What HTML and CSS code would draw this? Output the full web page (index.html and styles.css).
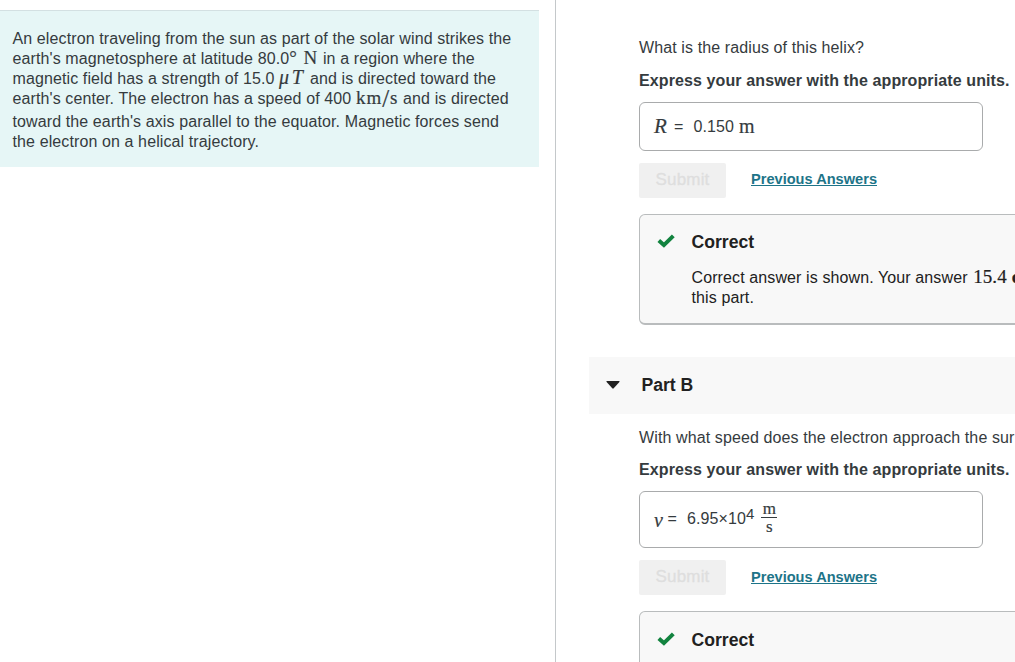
FILE: index.html
```html
<!DOCTYPE html>
<html lang="en">
<head>
  <meta charset="UTF-8">
  <meta name="viewport" content="width=device-width, initial-scale=1.0">
  <title>Part B</title>
  <link rel="stylesheet" href="styles.css">
</head>
<body>
  <div class="layout">
    <aside class="intro-pane">
      <div class="intro">
        <div>An electron traveling from the sun as part of the solar wind strikes the</div>
        <div>earth's magnetosphere at latitude 80.0<span class="math degree">°</span> <span class="math unit-n">N</span> in a region where the</div>
        <div>magnetic field has a strength of 15.0 <span class="math var mu-t">μT</span> and is directed toward the</div>
        <div class="tall">earth's center. The electron has a speed of 400 <span class="math kms">km<span class="slash">/</span>s</span> and is directed</div>
        <div>toward the earth's axis parallel to the equator. Magnetic forces send</div>
        <div>the electron on a helical trajectory.</div>
      </div>
    </aside>

    <main class="parts">
      <section class="part part-a">
        <p class="question">What is the radius of this helix?</p>
        <p class="instructions">Express your answer with the appropriate units.</p>
        <div class="answer">
          <span class="math var">R</span><span class="equals">=</span>
          <span class="value">0.150</span>
          <span class="math unit">m</span>
        </div>
        <div class="actions">
          <button class="submit" disabled>Submit</button>
          <a class="previous" href="#">Previous Answers</a>
        </div>
        <div class="feedback">
          <svg class="check" viewBox="0 0 18 14"><path d="M1.8 6.6 6.9 11.1 16.3 1.9" /></svg>
          <div class="feedback-body">
            <h3>Correct</h3>
            <div>Correct answer is shown. Your answer <span class="math result">15.4 <b>cm</b></span></div>
            <div>this part.</div>
          </div>
        </div>
      </section>

      <h2 class="part-header">
        <svg class="arrow" viewBox="0 0 14 8"><path d="M1 0h12q1 0 .4.9L7.7 7.3q-.7.7-1.4 0L.6.9Q0 0 1 0z" /></svg>
        Part B
      </h2>

      <section class="part part-b">
        <p class="question">With what speed does the electron approach the sur</p>
        <p class="instructions">Express your answer with the appropriate units.</p>
        <div class="answer">
          <span class="math var">v</span><span class="equals">=</span>
          <span class="value">6.95×10<sup>4</sup></span>
          <span class="math fraction"><span>m</span><span>s</span></span>
        </div>
        <div class="actions">
          <button class="submit" disabled>Submit</button>
          <a class="previous" href="#">Previous Answers</a>
        </div>
        <div class="feedback">
          <svg class="check" viewBox="0 0 18 14"><path d="M1.8 6.6 6.9 11.1 16.3 1.9" /></svg>
          <div class="feedback-body">
            <h3>Correct</h3>
          </div>
        </div>
      </section>
    </main>
  </div>
</body>
</html>
```

FILE: styles.css
```css
:root {
  --text-color: #353b3e;
  --dark-color: #212121;
  --link-color: #1d7488;
  --intro-bg: #e6f6f6;
  --panel-bg: #f8f8f8;
  --border-color: #b9bcbd;
}

* {
  margin: 0;
  padding: 0;
  box-sizing: border-box;
}

body {
  font-family: 'Liberation Sans', Arial, sans-serif;
  font-size: 16px;
  line-height: 20px;
  letter-spacing: 0.11px;
  color: var(--text-color);
  background-color: white;
  overflow: hidden;
}

.layout {
  display: flex;
  height: 662px;
}

.intro-pane {
  flex: 0 0 556px;
  padding: 10px 16px 0 0;
  border-right: 1px solid #c4c8ca;
}

.intro {
  height: 157px;
  padding: 18px 0 0 12.5px;
  background-color: var(--intro-bg);
  border-top: 1px solid #d3e0e2;
  white-space: nowrap;
}

.intro > div {
  height: 20px;
}

.intro > .tall {
  height: 23px;
}

.math {
  font-family: 'Liberation Serif', 'Times New Roman', serif;
  font-size: 19px;
  line-height: 1px;
  -webkit-text-stroke: 0.2px currentColor;
}

.var {
  font-style: italic;
}

.degree {
  margin-right: 2px;
}

.unit-n {
  margin-right: 1px;
}

.mu-t {
  font-size: 20px;
  letter-spacing: 2.6px;
}

.kms {
  letter-spacing: 1px;
}

.slash {
  font-size: 25px;
  vertical-align: -3px;
}

.parts {
  flex: 1;
  min-width: 0;
  padding-left: 33px;
  overflow: hidden;
  white-space: nowrap;
}

.part {
  width: 460px;
  padding-left: 50px;
}

.part-a {
  height: 357px;
  padding-top: 38px;
}

.part-b {
  padding-top: 14px;
}

.instructions {
  margin-top: 12px;
  font-weight: bold;
}

.part-a .instructions {
  margin-top: 13px;
}

.answer {
  display: flex;
  align-items: center;
  width: 344px;
  height: 49px;
  margin-top: 11px;
  padding-left: 14px;
  border: 1px solid #a9abac;
  border-radius: 6px;
}

.answer > .var {
  font-size: 21px;
}

.part-b .answer {
  height: 57px;
  padding-bottom: 2px;
}

.part-b .answer > .var {
  margin-top: 3px;
  font-size: 20px;
}

.equals {
  margin: 0 10px 0 7px;
}

.part-b .equals {
  margin-left: 4.5px;
}

.unit {
  margin-left: 5px;
  font-size: 20px;
}

sup {
  font-size: 15px;
  line-height: 1px;
  vertical-align: 5px;
}

.fraction {
  display: flex;
  flex-direction: column;
  align-items: center;
  width: 16px;
  margin: -2px 0 0 7px;
  font-size: 17px;
  line-height: 17px;
}

.fraction span:first-child {
  width: 16px;
  text-align: center;
  border-bottom: 1px solid var(--text-color);
}

.actions {
  display: flex;
  align-items: center;
  margin-top: 12px;
}

.submit {
  width: 87px;
  height: 35px;
  padding-bottom: 1px;
  font: 17px 'Liberation Sans', Arial, sans-serif;
  letter-spacing: 0.2px;
  color: #dedede;
  -webkit-text-stroke: 0.3px #dedede;
  background-color: #f0f0f0;
  border: none;
  border-radius: 2px;
}

.previous {
  margin: -3px 0 0 25px;
  font-size: 14.6px;
  font-weight: bold;
  letter-spacing: 0;
  color: var(--link-color);
}

.part-b .previous {
  margin-top: -2px;
}

.feedback {
  display: flex;
  height: 111px;
  margin-top: 16px;
  padding: 17px 0 0 17px;
  color: var(--dark-color);
  background-color: var(--panel-bg);
  border: 1px solid var(--border-color);
  border-bottom-width: 2px;
  border-radius: 6px;
}

.part-b .feedback {
  padding-top: 18px;
}

.check {
  flex: none;
  width: 18px;
  height: 14px;
  margin: 2px 16.5px 0 0;
  fill: none;
  stroke: #12833f;
  stroke-width: 4;
}

.result {
  margin-left: 1px;
}

h3 {
  margin-bottom: 16px;
  font-size: 17.6px;
  line-height: 20px;
  letter-spacing: 0;
}

.part-header {
  display: flex;
  align-items: center;
  height: 57px;
  padding: 0 0 2px 17px;
  font-size: 17.6px;
  letter-spacing: 0;
  color: var(--dark-color);
  background-color: var(--panel-bg);
}

.arrow {
  width: 14px;
  height: 8px;
  margin: 0 21.5px 0 0;
  fill: #212121;
}
```
